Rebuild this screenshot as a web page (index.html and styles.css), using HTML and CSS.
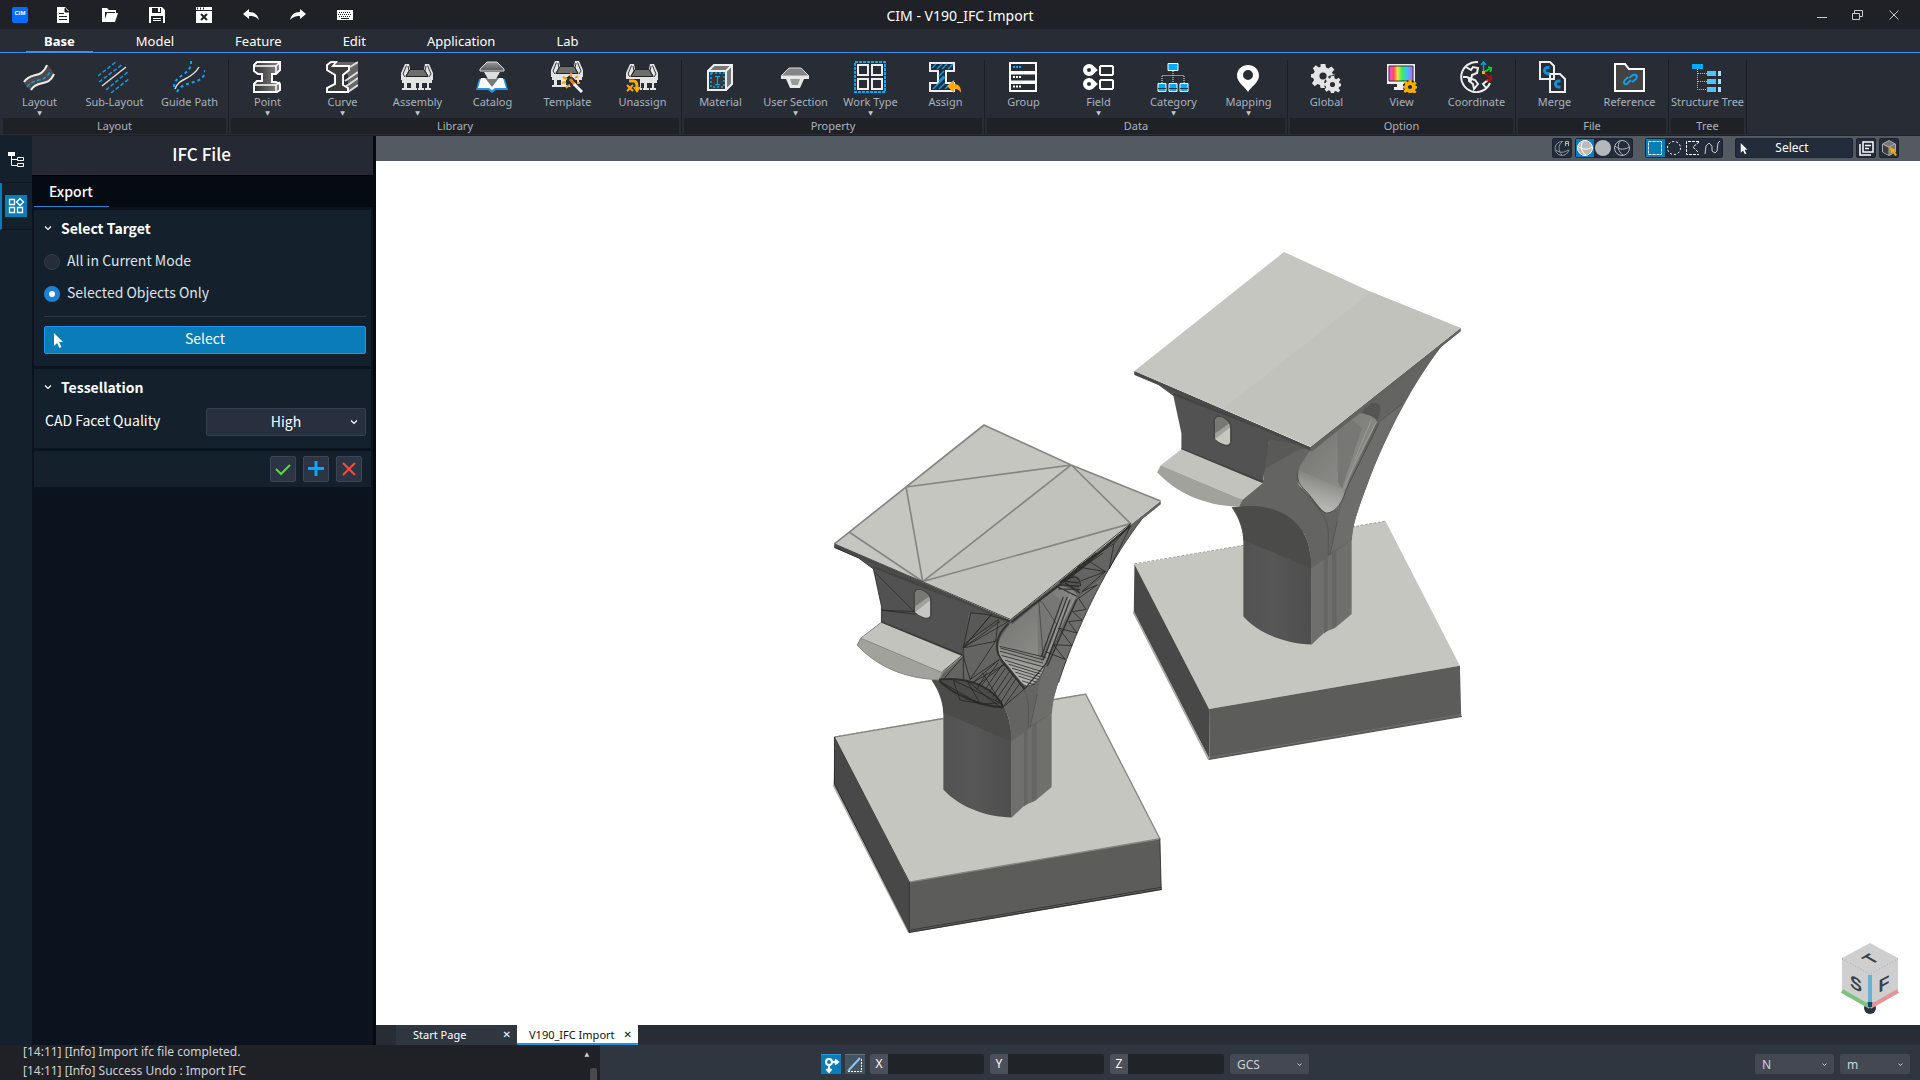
FILE: index.html
```html
<!DOCTYPE html>
<html lang="en">
<head>
  <meta charset="UTF-8" />
  <meta name="viewport" content="width=device-width, initial-scale=1.0"/>
  <title>CIM - V190_IFC Import</title>
  <link rel="stylesheet" href="styles.css">
</head>

<body>

  <!-- Title bar -->
  <header class="titlebar">
    <div class="quick">
      <span class="app-logo">CIM</span>
      <button aria-label="New"><svg viewBox="0 0 16 16"><path fill="#fff" d="M2 0h8l4 4v12H2z"/><path stroke="#202126" d="M4 6.500h5M4 9.500h8M4 12.500h8M10 1v4h4"/></svg></button>
      <button aria-label="Open"><svg viewBox="0 0 16 16"><path fill="#fff" d="M0 1h5l2 2h7v3h-2V5H4L2 12V6h14l-3 9H0z"/><path fill="#202126" d="M3 5h10v1H5l-2 6z"/></svg></button>
      <button aria-label="Save"><svg viewBox="0 0 16 16"><path fill="#fff" d="M0 0h13l3 3v13H0z"/><path fill="#202126" d="M3 1h9v5H3zM2 9h12v7H2z"/><path fill="#fff" d="M9 1h2v4H9zM4 11h8v1H4zM4 13h8v1H4z"/></svg></button>
      <button aria-label="Close file"><svg viewBox="0 0 16 16"><path fill="#fff" d="M0 0h16v3H0zM0 4h16v12H0z"/><path stroke="#202126" stroke-width="2" d="M5 7l6 6M11 7l-6 6M1 1.500h1M4 1.500h1M7 1.500h1"/></svg></button>
      <button aria-label="Undo"><svg viewBox="0 0 16 16"><path fill="#fff" d="M0 7l6-5v3c6 0 9 3 10 8-3-3-5-4-10-4v3z"/></svg></button>
      <button aria-label="Redo"><svg viewBox="0 0 16 16"><path fill="#fff" d="M16 7l-6-5v3C4 5 1 8 0 13c3-3 5-4 10-4v3z"/></svg></button>
      <button aria-label="Keyboard"><svg viewBox="0 0 16 16"><path fill="#fff" d="M0 3h16v10H0z"/><path stroke="#202126" stroke-dasharray="1 1" d="M2 5.500h12M1 7.500h14M2 9.500h12"/><path stroke="#202126" d="M4 11.500h8"/></svg></button>
    </div>
    <h1>CIM - V190_IFC Import</h1>
    <div class="window-buttons">
      <button aria-label="Minimize"><svg viewBox="0 0 12 12"><path d="M1 8.500h10"/></svg></button>
      <button aria-label="Restore"><svg viewBox="0 0 12 12"><path d="M.5 4.500h7v6h-7zM2.500 4V1.500h8v6H8"/></svg></button>
      <button aria-label="Close"><svg viewBox="0 0 12 12"><path d="M1.500 1.500l9 9M10.500 1.500l-9 9"/></svg></button>
    </div>
  </header>

  <nav class="tabs">
    <a href="#" class="active">Base</a>
    <a href="#">Model</a>
    <a href="#">Feature</a>
    <a href="#">Edit</a>
    <a href="#">Application</a>
    <a href="#">Lab</a>
  </nav>

  <!-- Shared drawings -->
  <svg class="defs" aria-hidden="true">
    <defs>
      <linearGradient id="steel" x1="0" x2="1"><stop offset="0" stop-color="#303030"/><stop offset="1" stop-color="#888"/></linearGradient>
      <linearGradient id="steelDown" x2="0" y2="1"><stop offset="0" stop-color="#999"/><stop offset="1" stop-color="#555"/></linearGradient>
      <linearGradient id="rainbow"><stop offset="0" stop-color="#ff40ff"/><stop offset=".2" stop-color="#ff5050"/><stop offset=".35" stop-color="#ffe040"/><stop offset=".55" stop-color="#30f060"/><stop offset=".75" stop-color="#40c0ff"/><stop offset="1" stop-color="#c060ff"/></linearGradient>
      <linearGradient id="colFace"><stop offset="0" stop-color="#505050"/><stop offset=".5" stop-color="#575757"/><stop offset="1" stop-color="#4e4e4e"/></linearGradient>
      <linearGradient id="hole" x2="1" y2="1"><stop offset="0" stop-color="#6f706d"/><stop offset=".55" stop-color="#858681"/><stop offset="1" stop-color="#94958f"/></linearGradient>
      <linearGradient id="trough" x1=".6" x2=".3" y2="1"><stop offset="0" stop-color="#777874"/><stop offset=".5" stop-color="#a1a29d"/><stop offset="1" stop-color="#c0c1bb"/></linearGradient>

      <symbol id="bridge" viewBox="0 0 32 32">
        <path fill="#e4e4e4" d="M4 3h4l1 5h14l1-5h4l4 9v7H0v-7zM1 18h30v4h-3v5h2v2h-6v-2h2v-5h-5v5h2v2h-6v-2h1v-5h-3v5h1v2H8v-2h2v-5H6v5h2v2H1v-2h2v-5H1z"/>
        <path fill="none" stroke="#33363c" d="M5.500 4.500L2 13l2 3M7 5l1 5-3 5M26.500 4.500L30 13l-2 3M25 5l-1 5 3 5"/>
        <path fill="#6e6e6e" stroke="#222" d="M9 8.500h14l4 7H5z"/>
      </symbol>

      <symbol id="cursor" viewBox="0 0 12 16">
        <path fill="#fff" d="M1 0v13l3-3 2.500 5 2-1-2.500-5h4z"/>
      </symbol>

      <symbol id="chevron" viewBox="0 0 8 8">
        <path fill="none" stroke="currentColor" stroke-width="1.200" d="M1 2.500l3 3 3-3"/>
      </symbol>

      <symbol id="gear" viewBox="0 0 20 20">
        <path d="M8 0h4l.5 3 2 .8L17 2l2.500 2.500-2 2.500.8 1.500 2.200.5v3l-2.500.5-.8 2 2 2.500-2.700 2.500-2.500-1.800-2 .8L12 20H8l-.5-2.500-2-.8L3 18.500.8 16l1.700-2.500L2 11.800 0 11V8.500L2.300 8l.8-2L1.500 3.500 4 1l2.500 2 1.500-.8zM10 7a3 3 0 1 0 0 6 3 3 0 0 0 0-6z"/>
      </symbol>

      <!-- pier -->
      <symbol id="pier" viewBox="0 0 1080 1600" overflow="visible">
        <!-- footing -->
        <path fill="#c5c6c0" d="M43 973L797 844l223 434-753 130z"/>
        <path fill="#484848" d="M43 973l224 435 1 150L41 1117z"/>
        <path fill="#5c5c5b" d="M267 1408l753-130 4 152-756 129z"/>
        <path fill="none" stroke="#a6a79f" stroke-width="5" d="M40 1117l226 442"/>
        <path fill="none" stroke="#555552" stroke-width="4" d="M266 1559l760-129"/>
        <path fill="none" stroke="#9a9b95" stroke-width="1" d="M268 1554l756-129"/>
        <path fill="none" stroke="#77786f" stroke-width="2" stroke-dasharray="8 5" d="M43 972L797 844"/>
        <!-- column -->
        <path fill="url(#colFace)" d="M335 803c25 35 35 75 35 105v222c50 55 130 82 205 84V960L520 780z"/>
        <path fill="#6f706e" d="M573 960l122-80v243l-50 42-30 12-40 37z"/>
        <path fill="#656664" d="M612 950l11-5v228l-11 8zM636 930l14-8v235l-14 10z"/>
        <!-- right limb -->
        <path fill="#646563" d="M574 628L1022 266v8l-57 46C880 430 800 580 740 740c-26 70-44 120-44 160l-123 86c0-60-10-90-30-118-40-56-110-76-186-68l5-30 68-50 3-47 104-56z"/>
        <path fill="#6d6e6c" d="M852 488l-72 56-24 58c-40 50-84 140-104 242l-24 96 68-40c0-40 18-90 44-160 30-84 68-170 112-252z"/>
        <path fill="none" stroke="#555653" stroke-width="3" d="M852 488l-72 56M625 945V880c0-50-42-90-85-135M652 844l-22 100"/>
        <path fill="#4b4b4a" d="M357 800c76-8 146 12 186 68 20 28 30 58 30 118L370 900c0-40-10-75-35-98z"/>
        <path fill="#595a58" d="M430 690l18-95 50 3 72 27-35 5-105 60z"/>
        <!-- opening through the limb -->
        <path fill="#555" d="M735 502c20-20 45-20 47 8l-10 34-45-26z"/>
        <path fill="url(#hole)" d="M570 632l150-112c34 4 52 16 50 28l-82 170-18 57-136-58c-2-18 2-36 16-54z"/>
        <path fill="url(#trough)" d="M532 690l140 58c0 40-24 70-52 72-24-14-34-44-84-84z"/>
        <path fill="#777875" d="M652 570l40-35 34 30-60 182-12-20z"/>
        <path fill="none" stroke="#9b9c97" stroke-width="3" d="M770 545l-66 125-34 80M755 538l-50 120"/>
        <path fill="none" stroke="#4c4d4b" stroke-width="3" d="M534 690c-4 30 0 40 24 64s40 64 62 66c28-2 50-36 58-70l100-202"/>
        <!-- left wall -->
        <path fill="#525252" d="M43 395L570 622l-80-16-42-8-20 130-244-100v-48l-24-112-45-33-72-30z"/>
        <path fill="none" stroke="#434343" stroke-width="7" d="M184 628l243 99M160 462L400 556"/>
        <path fill="#4a4a4a" stroke="#464646" stroke-width="4" d="M282 545c2-22 18-18 34-8 12 7 17 14 17 26v46c-4 18-26 6-40-4-8-6-11-10-11-20z"/>
        <path fill="#a1a29c" d="M285 545c2-18 16-16 30-6 10 7 15 14 15 22l-45 38z"/>
        <path fill="#c6c7c1" d="M285 597l45-36v48c-6 12-26 2-37-5z"/>
        <path fill="#777874" d="M285 545c2-18 16-16 30-6l12 12-42 30z"/>
        <!-- ledge -->
        <path fill="#c2c3bd" d="M122 676l62-48 244 102-60 50z"/>
        <path fill="#a1a29c" d="M122 676l246 104-11 21c-80-4-170-24-246-104z"/>
        <!-- deck -->
        <path fill="#626361" d="M570 622L1022 264v10L575 636z"/>
        <path fill="#484948" d="M43 393L572 622v10L43 403z"/>
        <path fill="#c5c6c0" d="M43 393L492 36l262 120L1022 264 572 620z"/>
        <path fill="#c1c2bc" d="M754 156l268 108L572 620 310 506z"/>
      </symbol>

      <!-- facet lines -->
      <symbol id="mesh" viewBox="0 0 1080 1600" overflow="visible">
        <g fill="none" stroke="#858681" stroke-width="5" stroke-linejoin="round">
          <path d="M43 393L492 36l262 120 268 108M258 222l496-66L308 506zM88 358l220 148 624-174-178-176"/>
          <path stroke-width="4" d="M370 917L43 973M702 860l95-16 223 434-753 130"/>
          <path stroke-width="3" d="M122 676l246 104 60-50-244-102-62 48-11 21c76 80 166 100 246 104l11-21"/>
        </g>
        <g fill="none" stroke="#262626" stroke-width="3" stroke-opacity=".8" stroke-linejoin="round">
          <path d="M43 393L572 620 932 332M43 403l72 32 45 33 24 112v48M162 476l120 120-96-4 100 12M184 628l243 99-60 50"/>
          <path d="M43 973v140l225 446V1408L43 973M268 1559l756-129-4-152M268 1553l756-129"/>
          <path d="M430 705l22-105 46 4 70 20-138 80 85-100-85 100 110-78M430 695l105-75-8 65-97 20v25l20 70 80-120M430 730l-60 70M430 730v70M450 800l88-60-78 68 94-54-80 62"/>
          <path stroke-width="6" d="M357 800c76-8 146 12 186 68l6 16M566 632c-40 34-44 80-20 112 18 24 40 50 68 84M548 884c-70-5-150-40-190-80"/>
          <path d="M360 806l120 68 60-4-140-68 20 60 60 10-40-70 60 50 40 30M482 822l52-72M494 832l52-76M506 840l50-74M518 852l50-76M526 864l54-78M540 872l50-78M548 884l50-70M548 884l66-56M548 880l-60-100M500 780l-30 50"/>
          <path d="M540 705l130 36M540 715l130 36M545 728l125 34M555 742l110 34M566 754l96 30M576 766l84 26M586 778l70 22M596 790l54 18M606 804l38 12M538 700l140 34"/>
          <path stroke="#444" d="M668 570l-12-8 14 174M668 570l42 64-40 100"/>
          <path stroke-width="4" d="M742 552l-72 190M750 560l-70 190-66 78M730 552l-66 180M770 560l-88 200M782 520c-2-34-26-34-50-14M776 510l-50-6M778 520l-60-4M780 530l-65-2M770 550l-60-30M736 510l44 30"/>
          <path d="M965 320C880 430 800 580 740 740c-10 26-18 50-24 70M932 332l-50 60-14 76 64-130M882 392l-110 70 84 14-74 28M800 440l56 36-70 60 46-20-56 40 22 34-40 6 28 26-40 4 24 34-54-14 40 52-56-2 36 44-60-24M850 420l-130 90"/>
          <path stroke-width="6" d="M574 628l60-48 148-112 150-130M720 510l110-90"/>
        </g>
      </symbol>
    </defs>
  </svg>

  <!-- Ribbon -->
  <div class="ribbon">
    <section class="group">
      <div class="tools">
        <button><svg viewBox="0 0 32 32"><path fill="#4b4b4b" d="M1 22C8 11 17 20 25 4l6 9C25 27 16 18 8 30z"/><path fill="none" stroke="#eee" stroke-width="2" d="M1 21C8 10 18 19 24 4M8 29c7-11 17-2 23-16"/><path fill="none" stroke="#2594cf" stroke-width="1.500" stroke-dasharray="4 2" d="M4 26c8-11 17-2 24-17"/></svg><span>Layout</span><i>▼</i></button>
        <button><svg viewBox="0 0 32 32"><path fill="none" stroke="#159ad8" stroke-width="1.500" stroke-dasharray="4 2" d="M0 15L19 0M1 21L25 3M8 29L31 10M13 32L32 17"/><path stroke="#ddd" stroke-width="1.500" d="M4 25L28 6"/></svg><span>Sub-Layout</span></button>
        <button><svg viewBox="0 0 32 32"><path fill="none" stroke="#00a8ff" stroke-width="2" stroke-dasharray="3 3" d="M1 26c0-13 18-11 17-26M4 31c6-13 28-6 28-22"/><path fill="none" stroke="#ddd" stroke-width="1.500" d="M2 28C6 16 18 20 26 6"/></svg><span>Guide Path</span></button>
      </div>
      <h2>Layout</h2>
    </section>

    <section class="group">
      <div class="tools">
        <button><svg viewBox="0 0 32 32"><path fill="url(#steel)" stroke="#fff" stroke-width="2" d="M3 4l3-3h23v8l-4 4h-4v8h4l4 2v6l-3 2H3v-8l3-3h5v-7H7l-4-3z"/><path fill="none" stroke="#fff" stroke-width="1.500" d="M3 5h22l4-4M25 5v7M3 24h22l4-3M25 24v7"/></svg><span>Point</span><i>▼</i></button>
        <button><svg viewBox="0 0 32 32"><path fill="#666" d="M6 1h26v24l-10 6V14z"/><path stroke="#ddd" stroke-width="2" d="M24 6l8-5M19 20l13-9M19 26l13-9M22 31l10-7"/><path fill="#3b3b3b" stroke="#fff" stroke-width="2" d="M1 4l4-3h5L7 5h16v4l-6 5v10l5 3v4H1v-4l8-4V14L1 9z"/></svg><span>Curve</span><i>▼</i></button>
        <button><svg viewBox="0 0 32 32"><use href="#bridge"/></svg><span>Assembly</span><i>▼</i></button>
        <button><svg viewBox="0 0 32 32"><path fill="#2496e8" d="M3 18L0 29h12l4 3 4-3h12l-3-11z"/><path fill="#fff" d="M5 17h22l3 10H19l-3 2-3-2H2z"/><path fill="#222" opacity=".6" d="M9 17h14l-7 9z"/><path fill="url(#steelDown)" stroke="#ddd" d="M4 8l7-7h10l7 7v2H4z"/><path fill="#ddd" d="M8 11h16l-4 7h-8z"/></svg><span>Catalog</span></button>
        <button><svg viewBox="0 0 32 32"><use href="#bridge" y="-3"/><path fill="#282c35" d="M15 17l4-3 13 12v6h-9z"/><path stroke="#f5a100" stroke-width="2" d="M20 12v4M12 16l4 2M11 22l4-1M15 27l3-3M24 17l3-2M26 22h3"/><path stroke="#e58220" stroke-width="3" d="M19 18l5 6"/><path stroke="#fff" stroke-width="3" d="M23 23l8 8"/></svg><span>Template</span></button>
        <button><svg viewBox="0 0 32 32"><use href="#bridge"/><path fill="#282c35" d="M0 18h14v14H0z"/><path fill="none" stroke="#fa0" stroke-width="2" d="M1 24l6 6M7 24l-6 6"/><path fill="none" stroke="#fa0" stroke-width="3" d="M3 20h4c4 0 4 3 4 8"/><path fill="#fa0" d="M7 26h8l-4 6z"/></svg><span>Unassign</span></button>
      </div>
      <h2>Library</h2>
    </section>

    <section class="group">
      <div class="tools">
        <button><svg viewBox="0 0 32 32"><path fill="#777" stroke="#eee" stroke-width="2" d="M4 10l6-6h18v19l-6 6H4z"/><path fill="#33383f" stroke="#eee" stroke-width="2" d="M4 10h18v19H4z"/><path stroke="#eee" stroke-width="2" d="M22 10l6-6"/><path fill="none" stroke="#0af" stroke-width="1.500" stroke-dasharray="2 2" d="M7 12h13v14H7z"/><path stroke="#0af" d="M11 15.500h5M11 23.500h5M13.500 15v8"/></svg><span>Material</span></button>
        <button><svg viewBox="0 0 32 32"><path fill="#858585" stroke="#ddd" d="M2 15l8-8h12l8 8z"/><path fill="#e8e8e8" d="M2 15h28v3h-5l-4 9H11l-4-9H2z"/><path fill="#999" d="M11 18h10l-2 6h-6z"/></svg><span>User Section</span><i>▼</i></button>
        <button><svg viewBox="0 0 32 32"><path fill="none" stroke="#0af" stroke-width="2" stroke-dasharray="3 1" d="M1 1h30v30H1z"/><path fill="none" stroke="#eee" stroke-width="2" d="M4 4h10v10H4zM18 4h10v10H18zM4 18h10v10H4zM18 18h10v10H18z"/></svg><span>Work Type</span><i>▼</i></button>
        <button><svg viewBox="0 0 32 32"><path fill="#222b35" stroke="#eee" stroke-width="2" d="M1 2h24v8h-8v12h8v8H1v-8h8V10H1z"/><path stroke="#0a9ce8" stroke-width="1.500" d="M3 7l4-4M8 8l5-5M13 8l5-5M19 8l5-5M10 15l5-5M10 20l5-5M4 28l12-12M10 28l6-6M16 28l4-4"/><path fill="#fa0" d="M18 25l7-6v4c5 0 7 3 7 9-2-4-4-4-7-4v4z"/></svg><span>Assign</span></button>
      </div>
      <h2>Property</h2>
    </section>

    <section class="group">
      <div class="tools">
        <button><svg viewBox="0 0 32 32"><path fill="none" stroke="#fff" stroke-width="2" d="M3 2h26v9H3zM3 12.500h26v8H3zM3 22h26v8H3z"/><path stroke="#0af" stroke-width="2" stroke-dasharray="2 1" d="M6 6h8"/><path stroke="#fff" stroke-width="2" stroke-dasharray="2 1" d="M6 16h8M6 25.500h8"/></svg><span>Group</span></button>
        <button><svg viewBox="0 0 32 32"><path fill="#fff" fill-rule="evenodd" d="M7 3c4 0 5 3 9 6-4 3-5 6-9 6A6 6 0 0 1 7 3zm0 4a2 2 0 1 0 0 4 2 2 0 0 0 0-4zM7 17c4 0 5 3 9 6-4 3-5 6-9 6a6 6 0 0 1 0-12zm0 4a2 2 0 1 0 0 4 2 2 0 0 0 0-4z"/><path fill="none" stroke="#fff" stroke-width="2" d="M19 5h11l1 1v7l-1 1H19l-1-1V6zM19 19h11l1 1v7l-1 1H19l-1-1v-7z"/></svg><span>Field</span><i>▼</i></button>
        <button><svg viewBox="0 0 32 32"><path fill="none" stroke="#eee" stroke-dasharray="1 1" d="M16 10v12M5 22v-7.500h22V22"/><path fill="#0af" stroke="#fff" d="M11 2.500h10v7H11zM1 22.500h8v8H1zM12 22.500h8v8h-8zM23 22.500h8v8h-8z"/><path stroke="#234" d="M1 27.500h8M12 27.500h8M23 27.500h8"/></svg><span>Category</span><i>▼</i></button>
        <button><svg viewBox="0 0 32 32"><path fill="#fff" fill-rule="evenodd" d="M16 4c6 0 11 4 11 11 0 6-8 11-11 16-3-5-11-10-11-16C5 8 10 4 16 4zm0 5a5 5 0 1 0 0 10 5 5 0 0 0 0-10z"/></svg><span>Mapping</span><i>▼</i></button>
      </div>
      <h2>Data</h2>
    </section>

    <section class="group">
      <div class="tools">
        <button><svg viewBox="0 0 32 32" fill="#e4e4e4" fill-rule="evenodd"><use href="#gear" x="1" y="3" width="24" height="24"/><circle cx="23" cy="23" r="9" fill="#282c35"/><use href="#gear" x="14" y="15" width="17" height="17"/></svg><span>Global</span></button>
        <button><svg viewBox="0 0 32 32"><path fill="#eee" d="M2 3h28v20H18v3h4v3H9v-3h3v-3H2z"/><path fill="url(#rainbow)" stroke="#333" d="M4 5h24v15H4z"/><circle cx="25" cy="26" r="7" fill="#282c35"/><use href="#gear" x="18" y="19" width="14" height="14" fill="#fa0" fill-rule="evenodd"/></svg><span>View</span></button>
        <button><svg viewBox="0 0 32 32"><path fill="none" stroke="#eee" stroke-width="2" d="M18 1.200A15 15 0 1 0 30 22M6 6l5 3 2-3 5 1-1 5-5 2-1 5-4-3-4 0M9 17l6 2 3 4-4 5-1-5-4-3zM28 19l-5 4 3 4"/><path stroke="#0a9ce8" stroke-width="1.500" fill="none" d="M23.500 11V2M21 4l2.500-3L26 4"/><path stroke="#0d0" stroke-width="1.500" fill="none" d="M24 11l7-4M28 6l4 1-2 4"/><path stroke="#d00" stroke-width="1.500" fill="none" d="M24 12l7 6M31 14v5h-5"/><path fill="#fa0" d="M22 10h3v3h-3z"/></svg><span>Coordinate</span></button>
      </div>
      <h2>Option</h2>
    </section>

    <section class="group">
      <div class="tools">
        <button><svg viewBox="0 0 32 32"><path fill="none" stroke="#eee" stroke-width="2" d="M2 1h10l4 4v13H2zM12 13h10l5 5v13H12z"/><path fill="none" stroke="#118fd8" stroke-width="3" d="M11.500 6.500h-2a3 3 0 0 0 0 6h2M22.500 20h-2a3 3 0 0 0 0 6h2"/></svg><span>Merge</span></button>
        <button><svg viewBox="0 0 32 32"><path fill="#434343" stroke="#fff" stroke-width="2" d="M2 3h10l4 5h15v22H2z"/><path fill="none" stroke="#0aa0f0" stroke-width="2" d="M16 17l4-3c3-1 5 1 3 4l-4 3M18 19l-4 4c-3 1-4-2-2-4l3-3"/></svg><span>Reference</span></button>
      </div>
      <h2>File</h2>
    </section>

    <section class="group">
      <div class="tools">
        <button><svg viewBox="0 0 32 32"><path fill="none" stroke="#bbb" stroke-dasharray="1 1" d="M6.500 8v20.500H16M7 12.500h9M7 20.500h9"/><path fill="#0af" d="M1 3h11v5H1z"/><path fill="#4cc4ff" d="M16 10h9v5h-9zM16 18h9v5h-9zM16 26h9v5h-9z"/><path fill="#a6e2ff" d="M27 10h3v5h-3zM27 18h3v5h-3zM27 26h3v5h-3z"/></svg><span>Structure Tree</span></button>
      </div>
      <h2>Tree</h2>
    </section>
  </div>

  <!-- Workspace -->
  <div class="workspace">
    <aside class="rail">
      <button aria-label="Tree"><svg viewBox="0 0 16 16"><path fill="#fff" d="M0 1h7v4H0z"/><path fill="none" stroke="#fff" d="M3.500 5v9.500H9M4 8.500h5M9.500 6.500h6v3h-6zM9.500 12.500h6v3h-6z"/></svg></button>
      <button aria-label="Functions" class="active"><svg viewBox="0 0 22 22"><path fill="#0a7cb8" d="M0 0h22v22H0z"/><path fill="none" stroke="#fff" stroke-width="1.300" d="M4.500 4.500h5v5h-5zM4.500 12.500h5v5h-5zM12.500 12.500h5v5h-5zM15 3.500l3.500 3.500-3.500 3.500L11.500 7z"/></svg></button>
    </aside>

    <aside class="panel">
      <h2 class="panel-title">IFC File</h2>
      <div class="panel-tabs"><a href="#">Export</a></div>

      <div class="card">
        <h3><svg><use href="#chevron"/></svg>Select Target</h3>
        <label class="radio"><input type="radio" name="target">All in Current Mode</label>
        <label class="radio"><input type="radio" name="target" checked>Selected Objects Only</label>
        <hr>
        <button class="select-button"><svg><use href="#cursor"/></svg>Select</button>
      </div>

      <div class="card">
        <h3><svg><use href="#chevron"/></svg>Tessellation</h3>
        <div class="field">
          <label for="quality">CAD Facet Quality</label>
          <div class="dropdown">
            <select id="quality"><option>High</option></select>
            <svg><use href="#chevron"/></svg>
          </div>
        </div>
      </div>

      <div class="card actions">
        <button aria-label="OK"><svg viewBox="0 0 16 16"><path stroke="#5fd63c" d="M1 8l5 5 9-9"/></svg></button>
        <button aria-label="Apply"><svg viewBox="0 0 16 16"><path stroke="#0af" stroke-width="3" d="M8 0v15M0 7.500h16"/></svg></button>
        <button aria-label="Cancel"><svg viewBox="0 0 16 16"><path stroke="#fb4b35" d="M2 2l12 12M14 2L2 14"/></svg></button>
      </div>
    </aside>

    <main class="view">
      <div class="view-tools">
        <div class="box"><button aria-label="Auto render"><svg viewBox="0 0 18 18"><path fill="none" stroke="#8c939c" d="M10 2.500a7 7 0 1 0 6 8M9 3c-4 3-4 9 0 13M3 11c4 3 8 3 12 0"/><path fill="none" stroke="#c5b5a0" d="M12.500 7V2.500h3V7M12 4.500h4"/></svg></button></div>
        <div class="box">
          <button aria-label="Shaded edges" class="on"><svg viewBox="0 0 18 18"><circle cx="9" cy="9" r="7.500" fill="#bbb" stroke="#fff"/><path fill="none" stroke="#fff" d="M7 2c-3 4-2 11 3 14M2 7c4 4 10 4 14 1"/></svg></button>
          <button aria-label="Shaded"><svg viewBox="0 0 18 18"><circle cx="9" cy="9" r="8" fill="#b4b7bc"/></svg></button>
          <button aria-label="Wireframe"><svg viewBox="0 0 18 18"><circle cx="9" cy="9" r="7.500" fill="none" stroke="#b4b7bc"/><path fill="none" stroke="#b4b7bc" d="M7 2c-3 4-2 11 3 14M2 7c4 4 10 4 14 1"/></svg></button>
        </div>
        <div class="box spaced">
          <button aria-label="Rectangle select" class="on"><svg viewBox="0 0 18 18"><path fill="none" stroke="#fff" stroke-dasharray="3 1" d="M2.500 2.500h13v13h-13z"/></svg></button>
          <button aria-label="Circle select"><svg viewBox="0 0 18 18"><circle cx="9" cy="9" r="6.500" fill="none" stroke="#fff" stroke-dasharray="2 2"/></svg></button>
          <button aria-label="Polygon select"><svg viewBox="0 0 18 18"><path fill="none" stroke="#fff" stroke-dasharray="3 1" d="M15 2.500H2.500v13H15M15 3L9 8l5 5"/></svg></button>
          <button aria-label="Freehand select"><svg viewBox="0 0 18 18"><path fill="none" stroke="#ccc" d="M2 15l1-8 3-3 3 3v5l3 2 2-2 1-8 2-2"/></svg></button>
        </div>
        <button class="mode"><svg><use href="#cursor"/></svg>Select</button>
        <div class="box"><button aria-label="Windows"><svg viewBox="0 0 18 18"><path fill="none" stroke="#fff" stroke-width="1.500" d="M6 3h10v10H6zM3 5v11h11M8 6.500h6M8 9.500h4"/></svg></button></div>
        <div class="box"><button aria-label="Pick solid"><svg viewBox="0 0 18 18"><path fill="#777" stroke="#aaa" d="M9 1.500l6.500 3.500v8L9 16.500 2.500 13V5z"/><path fill="#3c3c3c" d="M3 6l6 3v7l-6-3z"/><path fill="none" stroke="#aaa" d="M3 5l6 3 6-3M9 8v8"/><path fill="#fa0" d="M10 8l6 3-2 1 3 4-2 1-2-4-2 2z"/></svg></button></div>
      </div>

      <div class="canvas">
        <svg class="model" viewBox="0 0 1544 864">
          <use href="#pier" x="744" y="79" width="360" height="533"/>
          <use href="#pier" x="444" y="252" width="360" height="533"/>
          <use href="#mesh" x="444" y="252" width="360" height="533"/>
        </svg>
        <svg class="cube" viewBox="0 0 60 74">
          <path fill="#cfcfcf" d="M30 1l28 15v35L30 67 2 51V16z"/>
          <path fill="none" stroke="#aaa" stroke-dasharray="1 2" d="M2 17l28 15 28-15"/>
          <circle cx="30" cy="66" r="6" fill="#2b3242"/>
          <path stroke="#6ab0cf" stroke-width="4" d="M30 33v28"/>
          <path stroke="#7bc47e" stroke-width="4" d="M2 49l28 16"/>
          <path stroke="#e39494" stroke-width="4" d="M58 49L30 65"/>
          <path fill="#07506c" d="M28 60h4v5h-4z"/>
          <text transform="translate(16 48) skewY(28)">S</text>
          <text transform="translate(44 48) skewY(-28)">F</text>
          <text class="top" transform="translate(36 20) rotate(-30) skewX(30)">T</text>
        </svg>
      </div>

      <div class="files">
        <a href="#">Start Page <b>✕</b></a>
        <a href="#" class="active">V190_IFC Import <b>✕</b></a>
      </div>
    </main>
  </div>

  <!-- Status bar -->
  <footer class="status">
    <div class="log">
      <p>[14:11] [Info] Import ifc file completed.</p>
      <p>[14:11] [Info] Success Undo : Import IFC</p>
      <span class="scroll-up">▲</span>
      <span class="scroll-thumb"></span>
    </div>
    <div class="coords">
      <button class="on" aria-label="Snap"><svg viewBox="0 0 18 18"><circle cx="7" cy="6" r="3"/><path d="M7 9v7M4.500 13L7 16l2.500-3M10 6h6M13 3.500L16 6l-3 2.500"/></svg></button>
      <button aria-label="Angle"><svg viewBox="0 0 18 18"><path stroke="#8fc0ff" d="M2 15L14 2"/><path stroke-width="1" stroke-dasharray="2 1" d="M15.500 3v12.500H2"/></svg></button>
      <div class="coord"><label for="cx">X</label><input id="cx" type="text"></div>
      <div class="coord"><label for="cy">Y</label><input id="cy" type="text"></div>
      <div class="coord"><label for="cz">Z</label><input id="cz" type="text"></div>
      <div class="unit"><select aria-label="Coordinate system"><option>GCS</option></select><svg><use href="#chevron"/></svg></div>
    </div>
    <div class="units">
      <div class="unit"><select aria-label="Force unit"><option>N</option></select><svg><use href="#chevron"/></svg></div>
      <div class="unit length"><select aria-label="Length unit"><option>m</option></select><svg><use href="#chevron"/></svg></div>
    </div>
  </footer>

</body>
</html>
```
FILE: styles.css
```css
* {
  box-sizing: border-box;
}
body {
  margin: 0;
  height: 100vh;
  display: flex;
  flex-direction: column;
  overflow: hidden;
  background: #0b131e;
  color: #fff;
  font-family: "Noto Sans", sans-serif;
  font-size: 12px;
}
h1, h2, h3, p {
  margin: 0;
}
a {
  color: inherit;
  text-decoration: none;
}
button, input, select {
  font: inherit;
  color: inherit;
  border: 0;
  margin: 0;
  padding: 0;
  background: none;
}
svg {
  display: block;
}
.defs {
  position: absolute;
  width: 0;
  height: 0;
}

/* title bar */
.titlebar {
  display: grid;
  grid-template-columns: 1fr auto 1fr;
  align-items: center;
  height: 29px;
  flex: none;
  background: #202126;
}
.titlebar h1 {
  padding-top: 2px;
  font-size: 14px;
  font-weight: 400;
}
.quick {
  display: flex;
  gap: 31px;
  padding-left: 12px;
}
.quick svg {
  width: 16px;
  height: 16px;
}
.app-logo {
  width: 16px;
  height: 16px;
  margin-right: -4px;
  border-radius: 2px;
  background: #0a6cff;
  font: bold 6px/12px "Liberation Sans", sans-serif;
  text-align: center;
}
.window-buttons {
  display: flex;
  justify-content: flex-end;
  gap: 24px;
  padding-right: 20px;
}
.window-buttons svg {
  width: 12px;
  height: 12px;
  fill: none;
  stroke: #ccc;
}

/* ribbon */
.tabs {
  display: flex;
  gap: 25px;
  height: 24px;
  flex: none;
  padding-left: 26px;
  background: #282c35;
  border-bottom: 1px solid #3d8eee;
  font-size: 13px;
  line-height: 24px;
}
.tabs a {
  padding: 0 18px;
}
.tabs .active {
  font-weight: 700;
  border-bottom: 1px solid #3d8eee;
}
.ribbon {
  display: flex;
  height: 83px;
  flex: none;
  padding: 7px 0 0 1px;
  background: #282c35;
  border-bottom: 1px solid #1d2027;
}
.group {
  height: 74px;
  padding: 0 2px;
  border-right: 1px solid #1c1e24;
}
.tools {
  display: flex;
  gap: 2px;
  height: 58px;
}
.tools button {
  display: flex;
  flex-direction: column;
  align-items: center;
  width: 73px;
  color: #a9b3be;
  font-size: 11px;
  line-height: 16px;
  white-space: nowrap;
}
.tools svg {
  width: 32px;
  height: 32px;
  margin: 1px 2px 1px 0;
}
.tools i {
  font: 6px/6px "DejaVu Sans", sans-serif;
  color: #c5c9ce;
}
.group h2 {
  height: 16px;
  background: #202126;
  color: #a9b3be;
  font-size: 11px;
  font-weight: 400;
  line-height: 16px;
  text-align: center;
}

/* left side */
.workspace {
  display: flex;
  flex: 1;
  min-height: 0;
}
.rail {
  width: 32px;
  background: #14202c;
}
.rail button {
  display: flex;
  align-items: center;
  justify-content: center;
  width: 100%;
  height: 47px;
  border-bottom: 1px solid #0e1722;
}
.rail svg {
  width: 16px;
  height: 16px;
}
.rail .active {
  border-left: 2px solid #0a7cb8;
  padding-right: 2px;
}
.rail .active svg {
  width: 22px;
  height: 22px;
}
.panel {
  width: 344px;
  border-right: 3px solid #040a12;
  font-family: "Noto Sans CJK KR", sans-serif;
  font-size: 14px;
}
.panel-title {
  height: 40px;
  padding-right: 2px;
  background: #252933;
  border-bottom: 1px solid #000;
  font-size: 17px;
  font-weight: 500;
  line-height: 36px;
  text-align: center;
}
.panel-tabs {
  height: 31px;
  padding-left: 2px;
  background: #050b12;
}
.panel-tabs a {
  display: block;
  width: 75px;
  height: 31px;
  padding-left: 15px;
  border-bottom: 1px solid #2a86d8;
  font-weight: 500;
  line-height: 30px;
}
.card {
  margin: 3px 2px 0;
  padding: 8px 5px 12px 10px;
  background: #14202c;
}
.card h3 {
  display: flex;
  align-items: center;
  gap: 9px;
  height: 22px;
  padding-bottom: 2px;
  font-size: 14px;
  font-weight: 700;
}
.card h3 svg {
  width: 8px;
  height: 8px;
}
.radio {
  display: flex;
  align-items: center;
  gap: 7px;
  height: 20px;
  margin-top: 12px;
  padding-bottom: 4px;
  color: #dfe3e7;
}
.radio input {
  appearance: none;
  width: 16px;
  height: 16px;
  margin-top: 4px;
  border: 1px solid #323d4c;
  border-radius: 50%;
  background: #252d3b;
}
.radio input:checked {
  border: 5px solid #1a82d8;
  background: #fff;
}
.card hr {
  margin: 12px 0 9px;
  border: 0;
  border-top: 1px solid #2c3846;
}
.select-button {
  position: relative;
  width: 100%;
  height: 28px;
  padding-bottom: 4px;
  border: 1px solid #1f96ee;
  border-radius: 2px;
  background: #0a7cb8;
  line-height: 22px;
}
.select-button svg {
  position: absolute;
  left: 8px;
  top: 6px;
  width: 12px;
  height: 16px;
}
.field {
  display: flex;
  justify-content: space-between;
  height: 28px;
  margin-top: 9px;
  padding-left: 1px;
  line-height: 24px;
}
.dropdown {
  position: relative;
  width: 160px;
}
.dropdown select {
  width: 100%;
  height: 28px;
  padding-bottom: 3px;
  appearance: none;
  border: 1px solid #343e4d;
  border-radius: 2px;
  background: #283040;
  text-align-last: center;
}
.dropdown svg {
  position: absolute;
  right: 8px;
  top: 10px;
  width: 8px;
  height: 8px;
}
.actions {
  display: flex;
  justify-content: flex-end;
  gap: 7px;
  padding: 5px 9px;
}
.actions button {
  display: grid;
  place-items: center;
  width: 26px;
  height: 26px;
  border: 1px solid #3a4555;
  border-radius: 2px;
  background: #2c3545;
}
.actions svg {
  width: 16px;
  height: 16px;
  fill: none;
  stroke-width: 2;
}

/* 3D view */
.view {
  display: flex;
  flex-direction: column;
  flex: 1;
  min-width: 0;
}
.view-tools {
  display: flex;
  align-items: center;
  justify-content: flex-end;
  gap: 3px;
  height: 25px;
  padding: 0 21px 1px 0;
  background: #535a61;
}
.box {
  display: flex;
  height: 20px;
  border: 1px solid #1c2431;
  border-radius: 2px;
  background: #222c3b;
}
.spaced {
  margin: 0 9px;
}
.box button {
  width: 18px;
}
.box:not(.spaced) button + button,
.spaced button {
  width: 19px;
}
.box svg {
  width: 18px;
  height: 18px;
}
.box .on {
  background: #0a7cb8;
}
.mode {
  position: relative;
  width: 118px;
  height: 20px;
  padding-right: 4px;
  border: 1px solid #1c2431;
  border-radius: 2px;
  background: #222c3b;
  line-height: 16px;
}
.mode svg {
  position: absolute;
  left: 4px;
  top: 4px;
  width: 9px;
  height: 12px;
}
.canvas {
  position: relative;
  flex: 1;
  min-height: 0;
  background: #fff;
}
.model {
  width: 100%;
  height: 100%;
}
.cube {
  position: absolute;
  right: 20px;
  bottom: 9px;
  width: 60px;
  height: 74px;
  overflow: visible;
}
.cube text {
  fill: #39404d;
  font: bold 18px "Liberation Sans", sans-serif;
  text-anchor: middle;
}
.cube .top {
  font-size: 16px;
}
.files {
  display: flex;
  height: 20px;
  padding-left: 20px;
  background: #282c35;
  font-size: 11px;
  line-height: 19px;
}
.files a {
  display: flex;
  justify-content: space-between;
  width: 121px;
  padding: 0 6px 0 17px;
  background: #303640;
}
.files b {
  font: 10px/20px "DejaVu Sans", sans-serif;
}
.files .active {
  padding-left: 12px;
  background: #fff;
  border-bottom: 2px solid #1e96d8;
  color: #111;
}

/* status bar */
.status {
  display: grid;
  grid-template-columns: 600px auto 1fr;
  height: 35px;
  flex: none;
  background: #303640;
}
.log {
  position: relative;
  padding-left: 23px;
  background: #202126;
  color: #ccd2d8;
  font-size: 12px;
  line-height: 14px;
}
.log p {
  margin-bottom: 5px;
}
.scroll-up {
  position: absolute;
  right: 11px;
  top: 0;
  font: 6px/18px "DejaVu Sans", sans-serif;
}
.scroll-thumb {
  position: absolute;
  right: 3px;
  bottom: 0;
  width: 7px;
  height: 15px;
  border-radius: 2px 2px 0 0;
  background: #484a50;
}
.coords {
  display: flex;
  align-items: center;
  padding-left: 221px;
}
.coords button {
  width: 20px;
  height: 20px;
  margin-right: 4px;
  background: #455560;
  border-top: 1px solid #667680;
}
.coords button + .coord {
  margin-left: 1px;
}
.coords .on {
  background: #0a7cb8;
  border-color: #299bd8;
}
.coords button svg {
  width: 18px;
  height: 18px;
  margin: 0 auto;
  fill: none;
  stroke: #fff;
  stroke-width: 2;
}
.coord {
  display: flex;
  width: 114px;
  height: 20px;
  margin-right: 6px;
  border-radius: 2px;
  overflow: hidden;
  background: #202328;
}
.coord label {
  width: 18px;
  background: #4c505b;
  line-height: 20px;
  text-align: center;
}
.coord input {
  flex: 1;
  min-width: 0;
}
.units {
  display: flex;
  align-items: center;
  justify-content: flex-end;
  gap: 6px;
  padding-right: 10px;
}
.unit {
  position: relative;
  width: 79px;
  height: 20px;
}
.length {
  width: 70px;
}
.unit select {
  width: 100%;
  height: 20px;
  padding-left: 7px;
  appearance: none;
  border-radius: 2px;
  background: #444852;
  color: #ccd2d8;
}
.unit svg {
  position: absolute;
  right: 7px;
  top: 8px;
  width: 5px;
  height: 5px;
}
```
